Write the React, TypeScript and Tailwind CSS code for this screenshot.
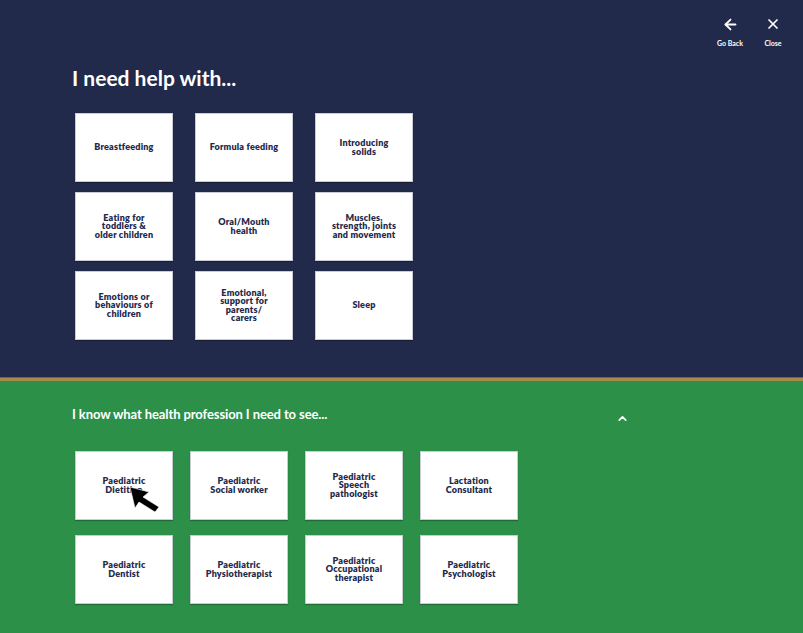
import { ArrowLeft, ChevronUp, X } from "lucide-react";

const helpTopics = [
  "Breastfeeding",
  "Formula feeding",
  "Introducing\nsolids",
  "Eating for\ntoddlers &\nolder children",
  "Oral/Mouth\nhealth",
  "Muscles,\nstrength, joints\nand movement",
  "Emotions or\nbehaviours of\nchildren",
  "Emotional,\nsupport for\nparents/\ncarers",
  "Sleep",
];

const professions = [
  "Paediatric\nDietitian",
  "Paediatric\nSocial worker",
  "Paediatric\nSpeech\npathologist",
  "Lactation\nConsultant",
  "Paediatric\nDentist",
  "Paediatric\nPhysiotherapist",
  "Paediatric\nOccupational\ntherapist",
  "Paediatric\nPsychologist",
];

function Tile({ label }: { label: string }) {
  return (
    <button className="flex h-[69px] w-[98px] items-center justify-center border border-[#c9ccd4] bg-white px-[6px] text-center text-[9px] leading-[8.5px] font-extrabold tracking-[0.2px] whitespace-pre-line text-[#1f2a4d] shadow-[0_1px_1px_rgba(0,0,0,0.25)]">
      {label}
    </button>
  );
}

export default function App() {
  return (
    <div className="relative h-[633px] w-[803px] overflow-hidden font-['Lato',sans-serif]">
      {/* navy section */}
      <section className="h-[377px] bg-[#212a4a] pt-[16px]">
        <div className="flex justify-end gap-[14px] pr-[18px] text-white">
          <button className="flex w-[34px] flex-col items-center">
            <ArrowLeft size={17} strokeWidth={2.6} />
            <span className="mt-[6px] text-[7px] leading-[8px] font-bold whitespace-nowrap">Go Back</span>
          </button>
          <button className="flex w-[24px] flex-col items-center">
            <X size={16} strokeWidth={2.6} />
            <span className="mt-[7px] text-[7px] leading-[8px] font-bold">Close</span>
          </button>
        </div>
        <h1 className="mt-[17px] pl-[72px] text-[21px] leading-[28px] font-bold text-white">
          I need help with...
        </h1>
        <div className="mt-[21px] ml-[75px] grid w-fit grid-cols-[repeat(3,98px)] gap-x-[22px] gap-y-[10px]">
          {helpTopics.map((t) => (
            <Tile key={t} label={t} />
          ))}
        </div>
      </section>

      <div className="h-px bg-[#56617e]" />
      <div className="h-[3px] bg-[#a98a4c]" />

      {/* green section */}
      <section className="h-[252px] bg-[#2c9048] pt-[21px]">
        <div className="ml-[72px] flex w-[557px] items-center justify-between">
          <h2 className="text-[13px] leading-[16px] font-bold tracking-[-0.1px] text-white">
            I know what health profession I need to see...
          </h2>
          <ChevronUp size={13} strokeWidth={3.2} className="mt-[10px] text-white" />
        </div>
        <div className="mt-[26px] ml-[75px] grid w-fit grid-cols-[repeat(4,98px)] gap-x-[17px] gap-y-[15px]">
          {professions.map((p) => (
            <Tile key={p} label={p} />
          ))}
        </div>
      </section>

      {/* mouse pointer */}
      <svg
        className="absolute top-[486px] left-[129px]"
        width="34"
        height="28"
        viewBox="0 0 34 28"
      >
        <polygon
          points="1,1 20,6 14,11 30,21 26,26 10,16 6,22"
          fill="#000"
          stroke="#fff"
          strokeWidth="0.6"
        />
      </svg>
    </div>
  );
}
